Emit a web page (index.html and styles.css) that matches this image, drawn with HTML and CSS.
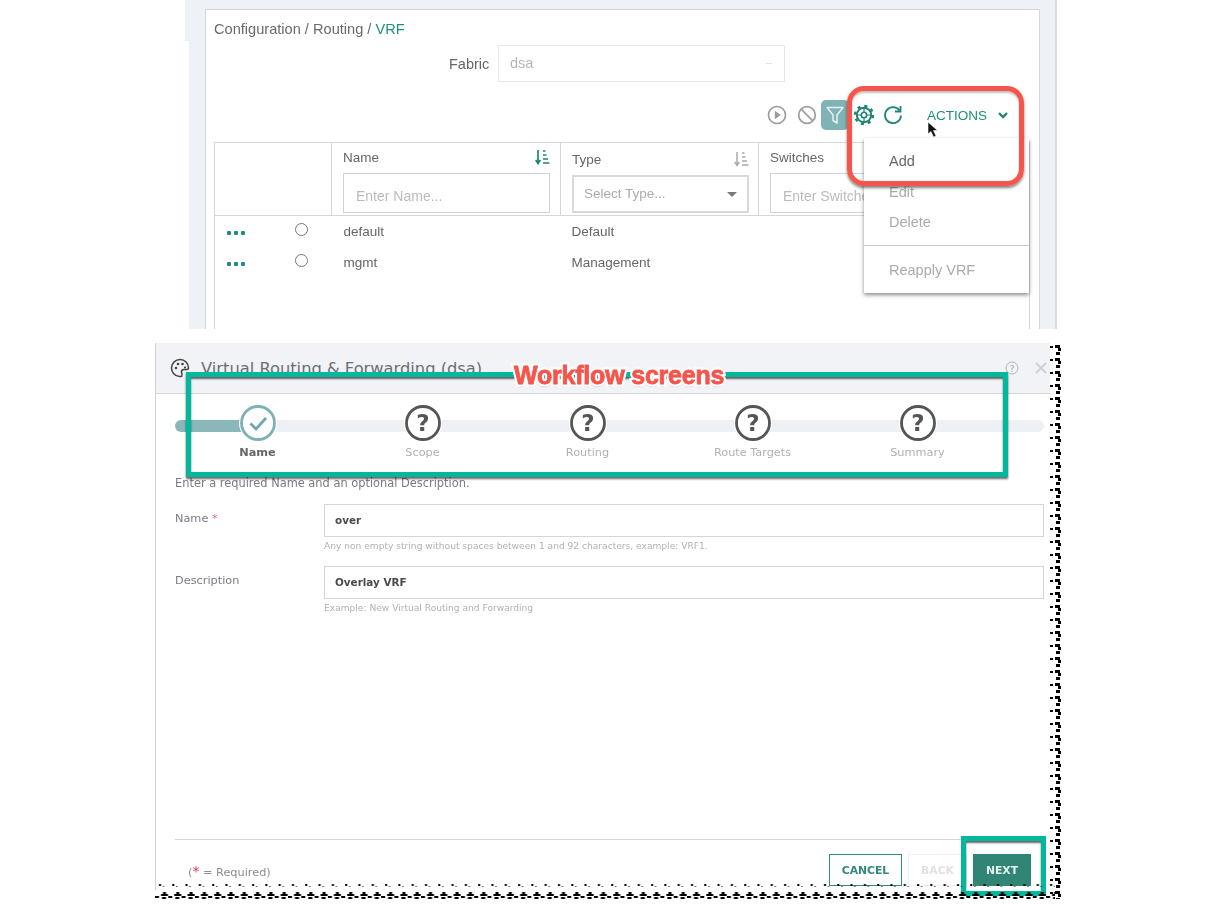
FILE: index.html
```html
<!doctype html>
<html>
<head>
<meta charset="utf-8">
<title>Configuration / Routing / VRF</title>
<link rel="stylesheet" href="styles.css">
</head>
<body>
<div class="page">

	<div class="vrf-panel">
		<div class="vrf-card">
			<div class="crumbs">Configuration / Routing / <span class="crumb-on">VRF</span></div>
			<div class="fabric">
				<label class="fabric-label">Fabric</label>
				<div class="fabric-select">dsa<span class="fabric-arrow"></span></div>
			</div>
			<div class="toolbar">
				<svg class="tool" width="20" height="20" viewBox="0 0 20 20"><circle cx="10" cy="10" r="8.5" fill="none" stroke="#9a9a9a" stroke-width="1.6"/><path d="M7.8 5.8l6 4.2-6 4.2z" fill="#9a9a9a"/></svg>
				<svg class="tool" width="20" height="20" viewBox="0 0 20 20"><circle cx="10" cy="10" r="8.3" fill="none" stroke="#a0a0a0" stroke-width="1.8"/><path d="M4.2 4.2l11.6 11.6" stroke="#a0a0a0" stroke-width="1.8"/></svg>
				<span class="tool-filter"><svg width="20" height="20" viewBox="0 0 20 20"><path d="M2 2.5h16l-6 7.5v8l-4-2.5v-5.500z" fill="none" stroke="#e6f1f1" stroke-width="1.5" stroke-linejoin="round"/></svg></span>
				<svg class="tool-gear" width="22" height="22" viewBox="0 0 22 22"><circle cx="11" cy="11" r="7.200" fill="none" stroke="#1e8572" stroke-width="2"/><circle cx="11" cy="11" r="9" fill="none" stroke="#1e8572" stroke-width="2.400" stroke-dasharray="3.100 3.970"/><circle cx="11" cy="11" r="2.700" fill="none" stroke="#1e8572" stroke-width="1.600"/><path d="M11 4v4.500M11 13.500V18M4 11h4.500M13.500 11H18" stroke="#1e8572" stroke-width="1.200"/></svg>
				<svg class="tool-refresh" width="20" height="20" viewBox="0 0 20 20"><path d="M16.500 5.500A8 8 0 1 0 18 10.500" fill="none" stroke="#1e8572" stroke-width="1.800"/><path d="M17.500 1v5.500H12" fill="none" stroke="#1e8572" stroke-width="1.800"/></svg>
				<span class="actions">ACTIONS</span>
				<svg class="actions-arrow" width="10" height="7" viewBox="0 0 10 7"><path d="M1 1l4 4 4-4" fill="none" stroke="#1e8572" stroke-width="2.400"/></svg>
			</div>
			<table class="grid">
				<tr class="grid-head">
					<th class="col-act"></th>
					<th class="col-name">
						<div class="th-top">Name
							<svg width="15" height="16" viewBox="0 0 15 16"><path d="M3 1v13M.7 11l2.300 3.500L5.300 11" fill="none" stroke="#1e8572" stroke-width="1.700"/><path d="M8 2h2.500M8 6h3.500M8 10h5M8 14h6.500" stroke="#1e8572" stroke-width="1.500"/></svg>
						</div>
						<div class="th-input">Enter Name...</div>
					</th>
					<th class="col-type">
						<div class="th-top th-low">Type
							<svg width="15" height="16" viewBox="0 0 15 16"><path d="M3 1v13M.7 11l2.300 3.500L5.300 11" fill="none" stroke="#aaa" stroke-width="1.500"/><path d="M8 2h2.500M8 6h3.500M8 10h5M8 14h6.500" stroke="#aaa" stroke-width="1.300"/></svg>
						</div>
						<div class="th-select">Select Type...<span class="th-caret"></span></div>
					</th>
					<th class="col-switches">
						<div class="th-top">Switches</div>
						<div class="th-input">Enter Switches...</div>
					</th>
				</tr>
				<tr class="grid-row">
					<td><div class="cell-act"><span class="dots"><i></i><i></i><i></i></span><span class="radio"></span></div></td>
					<td>default</td>
					<td>Default</td>
					<td></td>
				</tr>
				<tr class="grid-row">
					<td><div class="cell-act"><span class="dots"><i></i><i></i><i></i></span><span class="radio"></span></div></td>
					<td>mgmt</td>
					<td>Management</td>
					<td></td>
				</tr>
				<tr class="grid-fill"><td colspan="4"></td></tr>
			</table>
			<div class="menu">
				<div class="menu-item menu-on">Add</div>
				<div class="menu-item">Edit</div>
				<div class="menu-item">Delete</div>
				<div class="menu-line"></div>
				<div class="menu-item">Reapply VRF</div>
			</div>
		</div>
	</div>

	<div class="modal">
		<div class="modal-head">
			<svg width="20" height="20" viewBox="0 0 20 20"><path d="M11 18.500H9.500A8.500 8.500 0 1 1 18.500 10c0 1-.5 1.500-1.500 1.500h-3a2.500 2.500 0 0 0-2.500 2.500c0 1 .5 1.500.5 2.500s-.5 2-1 2z" fill="none" stroke="#444" stroke-width="1.500"/><circle cx="6" cy="10" r="1.300" fill="#444"/><circle cx="8" cy="6" r="1.300" fill="#444"/><circle cx="12.500" cy="6" r="1.300" fill="#444"/><circle cx="15" cy="9.500" r="1.100" fill="#444"/></svg>
			<span class="modal-title">Virtual Routing &amp; Forwarding (dsa)</span>
			<svg class="modal-help" width="14" height="14" viewBox="0 0 14 14"><circle cx="7" cy="7" r="6" fill="none" stroke="#b4b4b4" stroke-width="1"/><text x="7" y="10.500" text-anchor="middle" font-size="9.500" fill="#aaa" font-family="DejaVu Sans">?</text></svg>
			<svg class="modal-close" width="12" height="12" viewBox="0 0 12 12"><path d="M1 1l10 10M11 1L1 11" stroke="#cfcfcf" stroke-width="1.800"/></svg>
		</div>
		<div class="modal-body">
			<div class="steps">
				<div class="step step-done">
					<svg width="38" height="38" viewBox="0 0 38 38"><circle cx="19" cy="19" r="19" fill="#fff"/><circle cx="19" cy="19" r="16.500" fill="#fff" stroke="#7fb0b3" stroke-width="2.800"/><path d="M11.500 19.500l5.500 5.500 10-11" fill="none" stroke="#6fa8ac" stroke-width="2.800"/></svg>
					<span class="step-name">Name</span>
				</div>
				<div class="step">
					<svg width="38" height="38" viewBox="0 0 38 38"><circle cx="19" cy="19" r="19" fill="#fff"/><circle cx="19" cy="19" r="16.500" fill="#fff" stroke="#555" stroke-width="2.800"/><text x="19" y="27" text-anchor="middle" font-size="23" font-weight="bold" fill="#555" font-family="DejaVu Sans">?</text></svg>
					<span class="step-name">Scope</span>
				</div>
				<div class="step">
					<svg width="38" height="38" viewBox="0 0 38 38"><circle cx="19" cy="19" r="19" fill="#fff"/><circle cx="19" cy="19" r="16.500" fill="#fff" stroke="#555" stroke-width="2.800"/><text x="19" y="27" text-anchor="middle" font-size="23" font-weight="bold" fill="#555" font-family="DejaVu Sans">?</text></svg>
					<span class="step-name">Routing</span>
				</div>
				<div class="step">
					<svg width="38" height="38" viewBox="0 0 38 38"><circle cx="19" cy="19" r="19" fill="#fff"/><circle cx="19" cy="19" r="16.500" fill="#fff" stroke="#555" stroke-width="2.800"/><text x="19" y="27" text-anchor="middle" font-size="23" font-weight="bold" fill="#555" font-family="DejaVu Sans">?</text></svg>
					<span class="step-name">Route Targets</span>
				</div>
				<div class="step">
					<svg width="38" height="38" viewBox="0 0 38 38"><circle cx="19" cy="19" r="19" fill="#fff"/><circle cx="19" cy="19" r="16.500" fill="#fff" stroke="#555" stroke-width="2.800"/><text x="19" y="27" text-anchor="middle" font-size="23" font-weight="bold" fill="#555" font-family="DejaVu Sans">?</text></svg>
					<span class="step-name">Summary</span>
				</div>
			</div>
			<p class="intro">Enter a required Name and an optional Description.</p>
			<div class="field">
				<label class="field-label">Name <span class="req">*</span></label>
				<div class="field-main">
					<div class="field-input">over</div>
					<div class="field-help">Any non empty string without spaces between 1 and 92 characters, example: VRF1.</div>
				</div>
			</div>
			<div class="field">
				<label class="field-label">Description</label>
				<div class="field-main">
					<div class="field-input">Overlay VRF</div>
					<div class="field-help">Example: New Virtual Routing and Forwarding</div>
				</div>
			</div>
			<div class="modal-foot">
				<span class="required">(<span class="req-big">*</span> = Required)</span>
				<div class="buttons">
					<span class="btn btn-cancel">CANCEL</span>
					<span class="btn btn-back">BACK</span>
					<span class="btn btn-next">NEXT</span>
				</div>
			</div>
		</div>
	</div>

	<!-- annotations on top of the screenshots -->
	<div class="mark-red"></div>
	<svg class="cursor" width="12" height="17" viewBox="0 0 12 17"><path d="M1 1v12l3-2.500 2.500 5.500 2.500-1-2.500-5.500h4z" fill="#111" stroke="#fff" stroke-width=".6"/></svg>
	<div class="mark-flow"></div>
	<div class="mark-title" data-text="Workflow screens">Workflow screens</div>
	<div class="mark-next"></div>

	<svg class="torn" width="1215" height="912">
		<defs>
			<pattern id="tornRight" width="13" height="13" patternUnits="userSpaceOnUse" x="1049" y="343">
				<rect x="1" y="3" width="3" height="2" fill="#000"/>
				<rect x="6" y="2" width="5" height="3" fill="#000"/>
				<rect x="9" y="5" width="3" height="3" fill="#000"/>
				<rect x="7" y="9" width="4" height="3" fill="#000"/>
			</pattern>
			<pattern id="tornBottom" width="13.300" height="16" patternUnits="userSpaceOnUse" x="155" y="884">
				<rect x="4" y="0" width="2" height="2" fill="#000"/>
				<rect x="8" y="2" width="1" height="1" fill="#000"/>
				<rect x="8" y="8" width="3" height="2" fill="#000"/>
				<rect x="6" y="10" width="7" height="2" fill="#000"/>
				<rect x="0" y="12" width="4" height="2" fill="#000"/>
				<rect x="7" y="13" width="4" height="2" fill="#000"/>
			</pattern>
		</defs>
		<rect x="1049" y="343" width="13" height="556" fill="url(#tornRight)"/>
		<rect x="155" y="884" width="900" height="16" fill="url(#tornBottom)"/>
	</svg>
</div>
</body>
</html>
```

FILE: styles.css
```css
*{margin:0; padding:0; box-sizing:border-box;}
body{background:#fff; font-family:"Liberation Sans",Arial,sans-serif; color:#666;}
.page{position:relative; width:1215px; height:912px; overflow:hidden;}

/* top screenshot */
.vrf-panel{position:relative; width:868px; height:329px; margin-left:189px; padding:9px 15px 0 16px; background:#eef1f5; border-right:2px solid #d9dde3; filter:blur(.35px);}
.vrf-panel::before{content:""; position:absolute; left:-4px; top:0; width:4px; height:41px; background:#eef1f5;}
.vrf-card{position:relative; height:320px; padding:0 8px; background:#fff; border:1px solid #d3d7dc; border-bottom:0; overflow:hidden;}
.crumbs{height:35px; padding-top:10px; font-size:14.6px; line-height:18px; color:#6a6a6a;}
.crumb-on{color:#1e8f7b;}
.fabric{display:flex; align-items:center; padding-left:235px; height:37px;}
.fabric-label{width:49px; font-size:14.5px; color:#666;}
.fabric-select{position:relative; width:287px; height:37px; padding-left:11px; line-height:35px; font-size:14.5px; color:#b5b5b5; border:1px solid #e6e6e6;}
.fabric-arrow{position:absolute; right:12px; top:17px; width:6px; height:3px; border-top:1px solid #e2e2e2;}

.toolbar{display:flex; align-items:center; height:30px; margin-top:18px; padding-left:553px;}
.tool{margin-right:10px;}
.tool-filter{display:flex; align-items:center; justify-content:center; width:28px; height:30px; margin-left:-6px; border-radius:5px; background:#7fb3b5;}
.tool-gear{margin-left:4px;}
.tool-refresh{margin-left:8px;}
.actions{margin-left:24px; font-size:13.5px; color:#1e8f7b;}
.actions-arrow{margin-left:11px;}

.grid{width:816px; margin-top:12px; table-layout:fixed; border-collapse:collapse; font-size:13.5px;}
.grid th,.grid td{border:1px solid #d3d7dc; text-align:left; font-weight:normal;}
.grid-head{height:73px;}
.grid-head th{vertical-align:top; padding:0 10px 0 11px;}
.col-act{width:117px;}
.col-name{width:229px;}
.col-type{width:198px;}
.th-top{display:flex; justify-content:space-between; align-items:center; width:207px; height:30px; padding-bottom:2px; color:#666;}
.th-low{width:177px; height:32px; padding-bottom:0;}
.th-input{width:207px; height:40px; padding-left:12px; line-height:44px; font-size:14px; color:#bbb; border:1px solid #cfd3d8; white-space:nowrap;}
.th-select{position:relative; width:177px; height:38px; padding-left:10px; line-height:34px; font-size:13.5px; color:#aaa; border:2px solid #d6d9dd;}
.th-caret{position:absolute; right:10px; top:15px; border-top:5px solid #777; border-left:5px solid transparent; border-right:5px solid transparent;}

.grid .grid-row td{height:31px; border-top:0; border-bottom:0; border-left:0; border-right:0; padding-left:11px; color:#666;}
.grid .grid-row td:first-child{border-left:1px solid #d3d7dc; padding-left:12px;}
.grid .grid-row td:last-child{border-right:1px solid #d3d7dc;}
.grid .grid-row td:nth-child(2){padding-left:12px;}
.cell-act{display:flex; align-items:center;}
.dots{display:flex; gap:3px; width:68px; margin-top:4px;}
.dots i{width:4px; height:4px; background:#1e8f7b; border-radius:1px;}
.radio{width:13px; height:13px; margin-bottom:3px; border:1px solid #777; border-radius:50%;}
.grid .grid-fill td{height:60px; border-top:0; border-bottom:0;}

.menu{position:absolute; left:658px; top:128px; width:165px; height:155px; padding-top:8px; background:#fff; box-shadow:0 2px 4px rgba(0,0,0,.45);}
.menu-item{height:30.500px; padding-left:25px; line-height:30px; font-size:14.5px; color:#aaa;}
.menu-on{color:#666;}
.menu-line{height:1px; margin:7px 0 9px; background:#c9cdd2;}

/* wizard screenshot */
.modal{display:flex; flex-direction:column; width:895px; height:547px; margin:14px 0 0 155px; border-left:1px solid #d0d4da; font-family:"DejaVu Sans",sans-serif; filter:blur(.35px);}
.modal-head{display:flex; align-items:center; height:51px; padding-left:14px; background:#f1f3f6; border-bottom:1px solid #d5d8dd;}
.modal-title{margin-left:11px; font-size:16.300px; color:#6a7078;}
.modal-help{margin-left:523px;}
.modal-close{margin-left:16px;}
.modal-body{display:flex; flex-direction:column; flex:1; padding:0 6px 0 19px;}
.steps{position:relative; display:flex; height:73px; padding-top:10px;}
.steps::before{content:""; position:absolute; left:0; right:0; top:26px; height:12px; border-radius:6px; background:linear-gradient(to right,#8ab7ba 70px,#edf0f4 70px);}
.step{position:relative; display:flex; flex-direction:column; align-items:center; width:165px;}
.step-name{margin-top:4px; font-size:11.300px; line-height:14px; color:#aeb1b6;}
.step-done .step-name{font-weight:bold; color:#666;}
.intro{height:28px; margin-top:9px; font-size:11.400px; line-height:14px; color:#777c85;}
.field{display:flex; height:62px;}
.field-label{width:149px; padding-top:8px; font-size:11.300px; color:#777c85;}
.req{color:#e86a6a;}
.field-main{flex:1;}
.field-input{height:33px; padding-left:10px; line-height:31px; font-size:10.400px; font-weight:bold; color:#4a4a4a; border:1px solid #d2d5da;}
.field-help{margin-top:3px; font-size:9.100px; line-height:12px; color:#aeb1b6;}
.modal-foot{display:flex; justify-content:space-between; height:51px; margin-top:auto; padding:14px 13px 0 13px; border-top:1px solid #d2d5da;}
.required{padding-top:9px; font-size:11.300px; color:#8a8d92;}
.req-big{color:#e8364a; font-size:14px;}
.buttons{display:flex; gap:6px;}
.btn{display:flex; align-items:center; justify-content:center; height:32px; font-size:10.800px; font-weight:bold;}
.btn-cancel{width:73px; color:#2f8a7c; border:1px solid #2f8a7c;}
.btn-back{width:59px; color:#dfe1e4; border:1px solid #eceef0;}
.btn-next{width:58px; color:#e4f1ee; background:#308574;}

/* annotations */
.mark-red{position:absolute; left:847px; top:86px; width:177px; height:100px; border:5px solid #f5554b; border-radius:17px; box-shadow:0 2px 3px rgba(0,0,0,.5),inset 0 2px 2px rgba(0,0,0,.25);}
.cursor{position:absolute; left:927px; top:121px;}
.mark-flow{position:absolute; left:186px; top:372px; width:822px; height:105px; border:5px solid #00b89c; box-shadow:0 2px 2px rgba(0,0,0,.6),inset 0 2px 2px rgba(0,0,0,.6);}
.mark-title{position:absolute; z-index:1; left:514px; top:360px; font-family:"Liberation Sans",sans-serif; font-size:25px; line-height:30px; font-weight:bold; letter-spacing:-.2px; color:#f5554b; -webkit-text-stroke:.8px #f5554b;}
.mark-title::before{content:attr(data-text); position:absolute; z-index:-1; left:0; top:0; white-space:nowrap; -webkit-text-stroke:5px #fff; text-shadow:0 2px 2px rgba(0,0,0,.45);}
.mark-next{position:absolute; left:961px; top:836px; width:85px; height:60px; border:5px solid #00b89c; box-shadow:inset 0 2px 2px rgba(0,0,0,.6);}
.torn{position:absolute; left:0; top:0; pointer-events:none;}
```
